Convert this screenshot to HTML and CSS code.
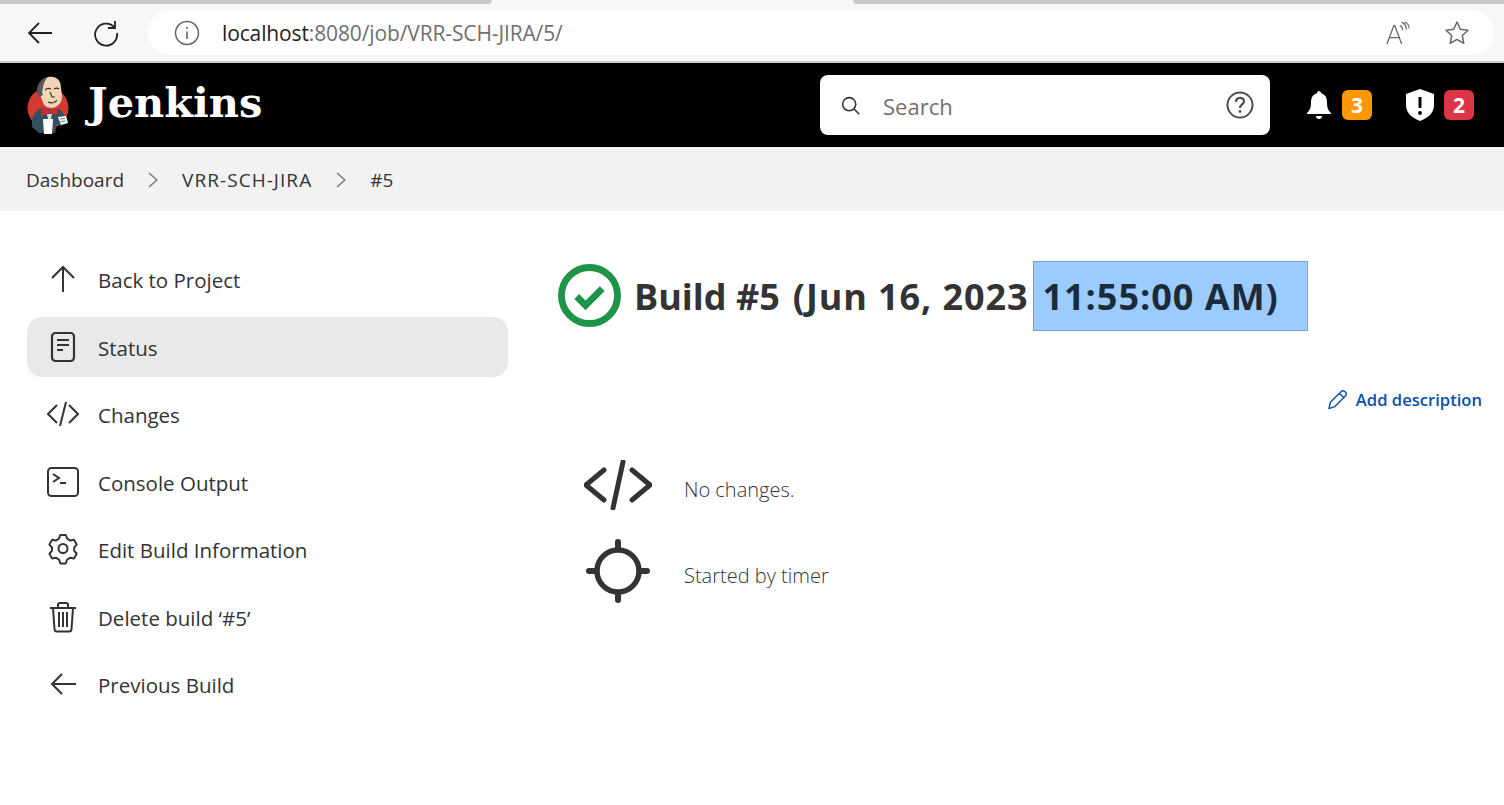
FILE: index.html
```html
<!DOCTYPE html>
<html lang="en">
<head>
<meta charset="utf-8">
<title>Build #5 - Jenkins</title>
<link rel="stylesheet" href="styles.css">
</head>
<body>
<div class="chrome">
  <div class="tabstrip"><span class="tab-off tab-left"></span><span class="tab-on"></span><span class="tab-off tab-right"></span></div>
  <div class="toolbar">
    <svg class="tb-btn" viewBox="0 0 28 28"><path d="M26 14H3M13 4 3 14l10 10" fill="none" stroke="#222" stroke-width="1.8"/></svg>
    <svg class="tb-btn" viewBox="0 0 28 28"><path d="M22.5 8.5A11 11 0 1 0 25 14" fill="none" stroke="#222" stroke-width="1.8"/><path d="M23 2v7h-7" fill="none" stroke="#222" stroke-width="1.8"/></svg>
    <div class="address">
      <svg class="info" viewBox="0 0 26 26"><circle cx="13" cy="13" r="11.5" fill="none" stroke="#666" stroke-width="1.5"/><path d="M13 11.5v7.5M13 7v2" stroke="#666" stroke-width="1.6"/></svg>
      <span class="url">localhost<span class="url-dim">:8080/job/VRR-SCH-JIRA/5/</span></span>
      <svg class="read" viewBox="0 0 26 26"><path d="M1 25 8.500 5h1L17 25M4 18h11" fill="none" stroke="#666" stroke-width="1.4"/><path d="M15 5c2 .5 3 2.500 3 5M17 1.500c3 1 5 4 5 8M20 1c3 1 5 4 5 7" fill="none" stroke="#666" stroke-width="1.200"/></svg>
      <svg class="star" viewBox="0 0 26 26"><path d="m13 2 3.300 7.300 7.700.9-5.700 5.300 1.500 7.800L13 19.400l-6.800 3.900 1.500-7.800L2 10.200l7.700-.9z" fill="none" stroke="#666" stroke-width="1.500" stroke-linejoin="round"/></svg>
    </div>
  </div>
</div>
<header class="topbar">
  <svg class="logo" viewBox="0 0 44 60">
    <circle cx="21" cy="33" r="20.500" fill="#d33833"/>
    <path d="M5 52c-1-9 2-16 10-19l8 2 8-1c5 2 7 6 7 13l-4 4-4-2-2 9H12z" fill="#335061"/>
    <path d="M13 9c2-6 8-8 13-7 6 1 8 6 8 11l1 8c0 7-4 11-10 12-6 0-9-3-10-9l-2-2z" fill="#f0d6b7"/>
    <path d="M13 24c-4-5-4-13 0-17 2-3 5-4 8-5-3 3-5 7-5 11l-1 4 1 3-2 1z" fill="#58585a"/>
    <path d="M18 15c2-2 4-2 6-1M27 14c1.500-1 3.500-1 5 0M23 17l2 5h3M21 27c3 1.500 7 1 9-2" fill="none" stroke="#3a2b24" stroke-width="1.100"/>
    <path d="M14 33l8 3 8-3v7l-8-2-8 3z" fill="#cc2e2a"/>
    <path d="M20 39h5l-1 5h-3z" fill="#d9d9d9"/>
    <path d="M16 44h10l-1 15h-8z" fill="#fff"/>
    <path d="M31 42l8-1 2 7-7 2z" fill="#fff"/>
    <path d="M33 44l5-.5M33.500 46.500l5-.5" stroke="#335061" stroke-width=".8"/>
  </svg>
  <span class="brand">Jenkins</span>
  <div class="search">
    <svg class="search-ico" viewBox="0 0 24 24"><circle cx="10.500" cy="10.500" r="7.500" fill="none" stroke="#333" stroke-width="1.800"/><path d="m16 16 6 6" stroke="#333" stroke-width="1.800"/></svg>
    <span class="search-text">Search</span>
    <svg class="help" viewBox="0 0 28 28"><circle cx="14" cy="14" r="12.500" fill="none" stroke="#4b4f56" stroke-width="2"/><path d="M10 11c0-5.500 8-5.500 8-.5 0 3-4 3-4 6.500" fill="none" stroke="#4b4f56" stroke-width="2.200"/><circle cx="14" cy="20.500" r="1.400" fill="#4b4f56"/></svg>
  </div>
  <div class="alert alert-bell">
    <svg class="alert-ico" viewBox="0 0 26 30"><path d="M13 1c1.300 0 2 1 2 2.200 4 1 6 4.300 6 8.800 0 6 1 8 4 11v1H1v-1c3-3 4-5 4-11 0-4.500 2-7.800 6-8.800C11 2 11.700 1 13 1z" fill="#fff"/><path d="M10 26h6c0 2-1.300 3-3 3s-3-1-3-3z" fill="#fff"/></svg>
    <span class="badge badge-orange">3</span>
  </div>
  <div class="alert">
    <svg class="alert-ico shield" viewBox="0 0 28 32"><path d="M14 0 28 5v11c0 8-6 13-14 16C6 29 0 24 0 16V5z" fill="#fff"/><path d="M14 8v11" stroke="#000" stroke-width="3"/><circle cx="14" cy="24" r="1.900" fill="#000"/></svg>
    <span class="badge badge-red">2</span>
  </div>
</header>
<nav class="crumbs">
  <span>Dashboard</span>
  <svg class="sep" viewBox="0 0 10 16"><path d="m1 1 8 7-8 7" fill="none" stroke="#777" stroke-width="1.500"/></svg>
  <span class="crumb-job">VRR-SCH-JIRA</span>
  <svg class="sep" viewBox="0 0 10 16"><path d="m1 1 8 7-8 7" fill="none" stroke="#777" stroke-width="1.500"/></svg>
  <span>#5</span>
</nav>
<main class="page">
  <aside class="side">
    <a class="item"><span class="item-ico"><svg viewBox="0 0 32 32"><path d="M16 29V5M5 15 16 4l11 11" fill="none" stroke="#333" stroke-width="2"/></svg></span>Back to Project</a>
    <a class="item item-on"><span class="item-ico"><svg viewBox="0 0 32 32"><rect x="5" y="2" width="22" height="28" rx="3.500" fill="none" stroke="#333" stroke-width="2.200"/><path d="M10 9h12M10 14h12M10 19h6" stroke="#333" stroke-width="2.200"/></svg></span>Status</a>
    <a class="item"><span class="item-ico"><svg viewBox="0 0 32 32"><path d="M10 7 1 16l9 9M22 7l9 9-9 9M19 4l-6 24" fill="none" stroke="#333" stroke-width="2"/></svg></span>Changes</a>
    <a class="item"><span class="item-ico"><svg viewBox="0 0 32 32"><rect x="1" y="2" width="30" height="28" rx="3.500" fill="none" stroke="#333" stroke-width="2"/><path d="m6 8 6 4-6 4M13 17h6" fill="none" stroke="#333" stroke-width="2"/></svg></span>Console Output</a>
    <a class="item"><span class="item-ico"><svg viewBox="0 0 32 32"><path d="M13 2h6l1.500 4 3.500 2 4-.8 3 5-2.800 3.100v3.400L31 21.800l-3 5-4-.8-3.500 2L19 32h-6l-1.500-4-3.500-2-4 .8-3-5 2.800-3.100v-3.400L1 12.200l3-5 4 .8 3.500-2z" transform="translate(1.500 0) scale(.91 .95)" fill="none" stroke="#333" stroke-width="2.100" stroke-linejoin="round"/><circle cx="16" cy="15.500" r="4.500" fill="none" stroke="#333" stroke-width="2"/></svg></span>Edit Build Information</a>
    <a class="item"><span class="item-ico"><svg viewBox="0 0 32 32"><path d="M3 7h26M11 7V3.500C11 2.500 12 2 13 2h6c1 0 2 .5 2 1.500V7M6 7l1.500 21c0 1.500 1 2.500 2.500 2.500h12c1.500 0 2.500-1 2.500-2.500L26 7M12 11v15M16 11v15M20 11v15" fill="none" stroke="#333" stroke-width="2"/></svg></span>Delete build ‘#5’</a>
    <a class="item"><span class="item-ico"><svg viewBox="0 0 32 32"><path d="M29 16H5M15 6 5 16l10 10" fill="none" stroke="#333" stroke-width="2"/></svg></span>Previous Build</a>
  </aside>
  <section class="content">
    <h1 class="title">
      <svg class="ok" viewBox="0 0 64 64"><circle cx="32" cy="32" r="28.500" fill="none" stroke="#1e9448" stroke-width="7"/><path d="m19 33 9 9 17-17" fill="none" stroke="#1e9448" stroke-width="7"/></svg>
      <span>Build #5</span>
      <span class="title-date">(Jun 16, 2023</span>
      <span class="selected">11:55:00 AM)</span>
    </h1>
    <div class="actions"><a class="add"><svg class="pencil" viewBox="0 0 22 22"><path d="M2 20.500 3.500 14 15 2.500c1-1 2.500-1 3.500 0l1 1c1 1 1 2.500 0 3.500L8 18.500zM13 4.500 18 9.500" fill="none" stroke="#0b50a8" stroke-width="1.500" stroke-linejoin="round"/></svg>Add description</a></div>
    <div class="row row-a"><span class="row-ico"><svg viewBox="0 0 68 50"><path d="M20 10 2 25l18 15M48 10l18 15-18 15M39 2 29 48" fill="none" stroke="#333" stroke-width="5" stroke-linecap="round" stroke-linejoin="round"/></svg></span><span class="row-text">No changes.</span></div>
    <div class="row row-b"><span class="row-ico"><svg viewBox="0 0 64 64"><circle cx="32" cy="32" r="21" fill="none" stroke="#333" stroke-width="5.500"/><path d="M32 3v6M32 55v6M3 32h6M55 32h6" stroke="#333" stroke-width="6" stroke-linecap="round"/></svg></span><span class="row-text">Started by timer</span></div>
  </section>
</main>
</body>
</html>
```
FILE: styles.css
```css
* { box-sizing: border-box; }
html, body { margin: 0; height: 100%; }
body { background: #fff; color: #333; font-family: "Open Sans", "Noto Sans", sans-serif; overflow: hidden; }
svg { display: block; }

.chrome { height: 63px; background: #f7f7f7; border-bottom: 2px solid #cfcfcf; }
.tabstrip { height: 4px; display: flex; }
.tab-off { background: #c8c8c8; height: 4px; }
.tab-left { width: 492px; border-bottom-right-radius: 4px; }
.tab-on { width: 361px; background: #f7f7f7; }
.tab-right { flex: 1; border-bottom-left-radius: 4px; }
.toolbar { display: flex; align-items: center; height: 57px; padding: 0 10px 0 26px; }
.tb-btn { width: 28px; height: 28px; margin-right: 38px; }
.tb-btn + .tb-btn { margin-right: 28px; }
.address { flex: 1; height: 45px; background: #fff; border-radius: 23px; display: flex; align-items: center; padding: 0 24px 0 26px; }
.info { width: 26px; height: 26px; margin-right: 22px; }
.url { font-size: 21px; color: #222; flex: 1; letter-spacing: -0.13px; }
.url-dim { color: #6f6f6f; }
.read { width: 24px; height: 26px; margin-right: 34px; }
.star { width: 26px; height: 26px; }

.topbar { height: 84px; background: #000; display: flex; align-items: center; padding: 0 30px 0 27px; }
.logo { width: 44px; height: 60px; margin-right: 17px; }
.brand { font-family: "DejaVu Serif", serif; font-weight: 700; font-size: 41.500px; line-height: 40px; color: #fff; flex: 1; margin-bottom: 4px; }
.search { width: 450px; height: 60px; background: #fff; border-radius: 8px; display: flex; align-items: center; padding: 0 16px 0 20px; margin-right: 36px; }
.search-ico { width: 21px; height: 21px; margin-right: 22px; }
.search-text { flex: 1; font-size: 22px; color: #707070; padding-top: 2px; }
.help { width: 28px; height: 28px; }
.alert { display: flex; align-items: center; gap: 10px; }
.alert-bell { margin-right: 34px; }
.alert-ico { width: 26px; height: 30px; }
.shield { width: 28px; height: 32px; }
.badge { width: 30px; height: 30px; border-radius: 6px; color: #fff; font-weight: 700; font-size: 21px; display: flex; align-items: center; justify-content: center; }
.badge-orange { background: #ff9800; }
.badge-red { background: #dc3545; }

.crumbs { height: 64px; background: #f2f2f2; display: flex; align-items: center; padding: 2px 0 0 26px; font-size: 19px; color: #333; }
.crumb-job { letter-spacing: 1.050px; }
.sep { width: 10px; height: 16px; margin: 0 24px; }

.page { display: flex; padding: 38px 22px 0 27px; }
.side { width: 481px; display: flex; flex-direction: column; gap: 7.5px; flex-shrink: 0; }
.item { height: 60px; display: flex; align-items: center; padding: 2px 0 0 20px; gap: 19px; border-radius: 15px; font-size: 20.500px; color: #333; }
.item-on { background: #e9e9e9; }
.item-ico { width: 32px; height: 32px; margin-top: -2px; }
.content { flex: 1; margin-left: 50px; }
.title { margin: 12px 0 0; height: 70px; display: flex; align-items: center; font-size: 36px; font-weight: 700; color: #333; }
.ok { width: 63px; height: 63px; margin: 0 13px 2px 0; }
.title-date { margin-left: 13px; letter-spacing: 0.900px; }
.selected { margin-left: 5px; width: 275px; height: 70px; background: #9ccbff; border: 1px solid #6ba3ee; padding-left: 8px; color: #1c2b3a; letter-spacing: 1px; display: flex; align-items: center; }
.actions { display: flex; justify-content: flex-end; margin-top: 57px; }
.add { display: flex; align-items: center; gap: 8px; font-size: 16.600px; font-weight: 600; color: #0b50a8; }
.pencil { width: 21px; height: 21px; }
.row { display: flex; align-items: center; font-size: 20px; font-weight: 300; color: #333; }
.row-text { margin-top: 8px; }
.row-a { margin-top: 46px; height: 56px; }
.row-b { margin-top: 26px; height: 64px; }
.row-ico { width: 68px; margin-left: 26px; margin-right: 32px; display: flex; justify-content: center; }
.row-a svg { width: 68px; height: 50px; }
.row-b svg { width: 64px; height: 64px; }
```
